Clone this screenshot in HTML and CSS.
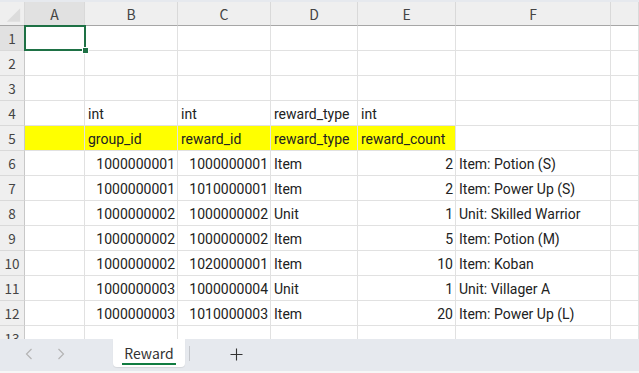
FILE: index.html
```html
<!DOCTYPE html>
<html>
	<head>
		<meta charset="UTF-8">
		<title>Reward</title>
		<link rel="stylesheet" href="styles.css">
	</head>
	<body>
		<div class="app">
			<div class="ribbon-edge"></div>

			<div class="sheet">
				<div class="hd corner">
					<svg width="25" height="24" viewBox="0 0 25 24"><polygon points="21,6 21,20 7,20" fill="#dcdcdc"/></svg>
				</div>
				<div class="hd col sel">A</div>
				<div class="hd col">B</div>
				<div class="hd col">C</div>
				<div class="hd col">D</div>
				<div class="hd col">E</div>
				<div class="hd col">F</div>
				<div class="hd col"></div>

				<div class="hd row sel">1</div>
				<div class="c active"></div><div class="c"></div><div class="c"></div><div class="c"></div><div class="c"></div><div class="c"></div><div class="c"></div>

				<div class="hd row">2</div>
				<div class="c"></div><div class="c"></div><div class="c"></div><div class="c"></div><div class="c"></div><div class="c"></div><div class="c"></div>

				<div class="hd row">3</div>
				<div class="c"></div><div class="c"></div><div class="c"></div><div class="c"></div><div class="c"></div><div class="c"></div><div class="c"></div>

				<div class="hd row">4</div>
				<div class="c"></div><div class="c">int</div><div class="c">int</div><div class="c">reward_type</div><div class="c">int</div><div class="c"></div><div class="c"></div>

				<div class="hd row">5</div>
				<div class="c mark"></div><div class="c mark">group_id</div><div class="c mark">reward_id</div><div class="c mark">reward_type</div><div class="c mark">reward_count</div><div class="c"></div><div class="c"></div>

				<div class="hd row">6</div>
				<div class="c"></div><div class="c num">1000000001</div><div class="c num">1000000001</div><div class="c">Item</div><div class="c num">2</div><div class="c">Item: Potion (S)</div><div class="c"></div>

				<div class="hd row">7</div>
				<div class="c"></div><div class="c num">1000000001</div><div class="c num">1010000001</div><div class="c">Item</div><div class="c num">2</div><div class="c">Item: Power Up (S)</div><div class="c"></div>

				<div class="hd row">8</div>
				<div class="c"></div><div class="c num">1000000002</div><div class="c num">1000000002</div><div class="c">Unit</div><div class="c num">1</div><div class="c">Unit: Skilled Warrior</div><div class="c"></div>

				<div class="hd row">9</div>
				<div class="c"></div><div class="c num">1000000002</div><div class="c num">1000000002</div><div class="c">Item</div><div class="c num">5</div><div class="c">Item: Potion (M)</div><div class="c"></div>

				<div class="hd row">10</div>
				<div class="c"></div><div class="c num">1000000002</div><div class="c num">1020000001</div><div class="c">Item</div><div class="c num">10</div><div class="c">Item: Koban</div><div class="c"></div>

				<div class="hd row">11</div>
				<div class="c"></div><div class="c num">1000000003</div><div class="c num">1000000004</div><div class="c">Unit</div><div class="c num">1</div><div class="c">Unit: Villager A</div><div class="c"></div>

				<div class="hd row">12</div>
				<div class="c"></div><div class="c num">1000000003</div><div class="c num">1010000003</div><div class="c">Item</div><div class="c num">20</div><div class="c">Item: Power Up (L)</div><div class="c"></div>

				<div class="hd row">13</div>
				<div class="c"></div><div class="c"></div><div class="c"></div><div class="c"></div><div class="c"></div><div class="c"></div><div class="c"></div>
			</div>

			<div class="tabs">
				<span class="nav">
					<svg width="8" height="12" viewBox="0 0 8 12"><path d="M6.5 1 L1.5 6 L6.5 11" fill="none" stroke="#b4b4b4" stroke-width="1.2"/></svg>
				</span>
				<span class="nav">
					<svg width="8" height="12" viewBox="0 0 8 12"><path d="M1.5 1 L6.5 6 L1.5 11" fill="none" stroke="#b4b4b4" stroke-width="1.2"/></svg>
				</span>
				<span class="tab"><span class="tab-name">Reward</span></span>
				<span class="tab-sep"></span>
				<span class="add">
					<svg width="13" height="13" viewBox="0 0 13 13"><path d="M6.5 0.5 V12.5 M0.5 6.5 H12.5" stroke="#333" stroke-width="1.1"/></svg>
				</span>
			</div>

			<div class="status-edge"></div>
		</div>
	</body>
</html>
```

FILE: styles.css
```css
body {
    margin: 0; padding: 0;
    font-family: Roboto, "Noto Sans CJK JP", sans-serif;
    font-size: 14px;
    color: #222;
    background: #fff;
    overflow: hidden;
}

.app {
    width: 639px;
    height: 373px;
    display: flex; flex-direction: column;
    overflow: hidden;
}

.ribbon-edge {
    height: 2px;
    flex: none;
    background-color: #e6e9ee;
}

.sheet {
    flex: 1;
    overflow: hidden;
    display: grid;
    grid-template-columns: 25px 60px 93px 93px 87px 98px 155px 1fr;
    grid-template-rows: 24px;
    grid-auto-rows: 25px;
}

.hd {
    background-color: #efefef;
    color: #444;
    font-family: "Noto Sans CJK JP", sans-serif;
    font-size: 14px;
    display: flex;
    align-items: center;
    justify-content: center;
    box-sizing: border-box;
}

.hd.col {
    border-right: 1px solid #d9d9d9;
    border-bottom: 1px solid #a6a6a6;
}

.hd.row {
    border-right: 1px solid #c8c8c8;
    border-bottom: 1px solid #d9d9d9;
    font-size: 13.5px;
}

.hd.corner {
    border-right: 1px solid #d9d9d9;
    border-bottom: 1px solid #a6a6a6;
    align-items: stretch;
}

.hd.sel {
    background-color: #e1e1e1;
}

.c {
    box-sizing: border-box;
    border-right: 1px solid #e1e1e1;
    border-bottom: 1px solid #e1e1e1;
    padding: 0 3px 2px 3px;
    display: flex;
    align-items: flex-end;
    line-height: 18px;
    white-space: nowrap;
    overflow: visible;
}

.c.num {
    justify-content: flex-end;
    padding-right: 2px;
}

.c.mark {
    background-color: #ffff00;
}

.c.active {
    position: relative;
}

.c.active::before {
    content: "";
    position: absolute;
    top: -1px; left: -1px; right: -2px; bottom: -1px;
    border: 2px solid #1e7145;
}

.c.active::after {
    content: "";
    position: absolute;
    right: -5px; bottom: -4px;
    width: 5px; height: 5px;
    background-color: #1e7145;
    border: 1px solid #fff;
}

.tabs {
    height: 32px;
    flex: none;
    background-color: #e6e9ee;
    display: flex;
    align-items: flex-start;
}

.nav {
    width: 32px;
    height: 30px;
    display: flex;
    align-items: center;
    justify-content: center;
}

.nav:first-child {
    margin-left: 13px;
}

.tab {
    margin-left: 36px;
    width: 72px;
    height: 28px;
    background-color: #fff;
    border-radius: 0 0 4px 4px;
    box-shadow: 0 1px 1px rgba(0, 0, 0, .08);
    display: flex;
    justify-content: center;
}

.tab-name {
    font-family: "Noto Sans CJK JP", sans-serif;
    font-size: 14px;
    color: #333;
    line-height: 20px;
    padding-top: 4px;
    height: 20px;
    border-bottom: 2px solid #107c41;
    padding-left: 2px; padding-right: 2px;
}

.tab-sep {
    width: 1px;
    height: 15px;
    margin: 7px 0 0 4px;
    background-color: #c4c7cc;
}

.add {
    margin-left: 40px;
    height: 30px;
    display: flex;
    align-items: center;
}

.status-edge {
    height: 2px;
    flex: none;
    background-color: #f7f7f7;
}
```
